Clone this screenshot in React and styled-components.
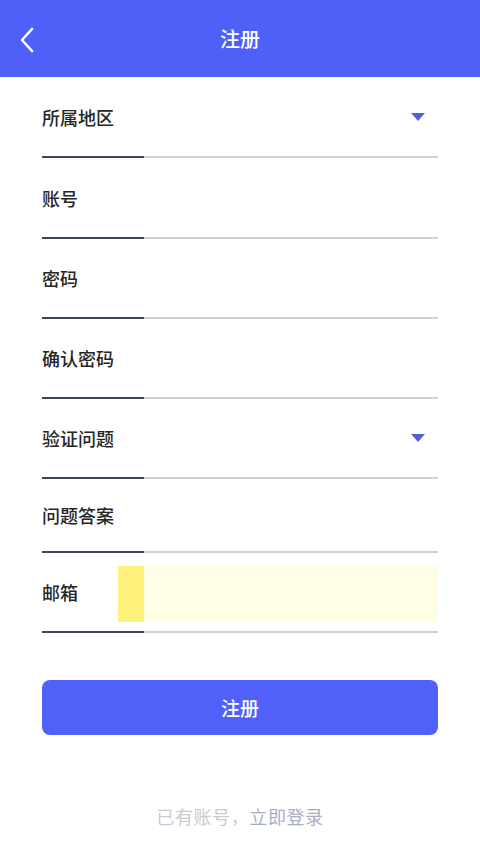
import React from "react";
import styled, { createGlobalStyle } from "styled-components";

const GlobalStyle = createGlobalStyle`
  html, body {
    margin: 0;
    padding: 0;
    background: #fff;
    font-family: "Noto Sans CJK SC", "Noto Sans", sans-serif;
  }
`;

const Page = styled.div`
  width: 480px;
  min-height: 853px;
  background: #fff;
`;

const TopBar = styled.div`
  height: 77px;
  background: #4f60f8;
  display: flex;
  align-items: center;
  justify-content: center;
  position: relative;
  color: #fff;
  font-size: 20px;
  font-weight: 500;
`;

const BackBtn = styled.div`
  position: absolute;
  left: 19px;
  top: 26px;
  width: 24px;
  height: 28px;
  display: flex;
  align-items: center;
`;

const Form = styled.div`
  padding: 0 42px;
  display: flex;
  flex-direction: column;
`;

const Row = styled.div`
  height: ${({ h }) => h}px;
  display: flex;
  align-items: center;
  justify-content: space-between;
  position: relative;
`;

const Label = styled.span`
  font-size: 18px;
  font-weight: 500;
  color: #262626;
  position: relative;
  z-index: 1;
`;

const Line = styled.div`
  height: 2px;
  background: #cfd0da;
  position: relative;

  &::before {
    content: "";
    position: absolute;
    left: 0;
    top: 0;
    width: 102px;
    height: 2px;
    background: #3a4660;
  }
`;

const Arrow = styled.div`
  width: 0;
  height: 0;
  border-left: 7px solid transparent;
  border-right: 7px solid transparent;
  border-top: 8px solid #5560d0;
  margin-right: 13px;
`;

const Autofill = styled.div`
  position: absolute;
  left: 76px;
  right: 0;
  top: 13px;
  height: 56px;
  background: linear-gradient(to right, #fff27a 0, #fff27a 26px, #fffde3 26px);
`;

const SubmitBtn = styled.button`
  margin: 47px 42px 0;
  width: 396px;
  height: 55px;
  border: none;
  border-radius: 8px;
  background: #5061f9;
  color: #fff;
  font-size: 19px;
  font-weight: 500;
  font-family: inherit;
`;

const Footer = styled.div`
  margin-top: 68px;
  text-align: center;
  font-size: 18px;
  color: #c9cad3;
  letter-spacing: 0.6px;
`;

const LoginLink = styled.span`
  color: #a9adc6;
`;

const fields = [
  { label: "所属地区", select: true, h: 79 },
  { label: "账号", h: 79 },
  { label: "密码", h: 78 },
  { label: "确认密码", h: 78 },
  { label: "验证问题", select: true, h: 78 },
  { label: "问题答案", h: 72 },
  { label: "邮箱", h: 78, autofill: true },
];

export default function App() {
  return (
    <Page>
      <GlobalStyle />
      <TopBar>
        <BackBtn>
          <svg width="16" height="26" viewBox="0 0 16 26" fill="none">
            <path d="M13 2 L3 13 L13 24" stroke="#fff" strokeWidth="2.6" strokeLinecap="round" strokeLinejoin="round" />
          </svg>
        </BackBtn>
        注册
      </TopBar>
      <Form>
        {fields.map((f) => (
          <React.Fragment key={f.label}>
            <Row h={f.h}>
              {f.autofill && <Autofill />}
              <Label>{f.label}</Label>
              {f.select && <Arrow />}
            </Row>
            <Line />
          </React.Fragment>
        ))}
      </Form>
      <SubmitBtn>注册</SubmitBtn>
      <Footer>
        已有账号，<LoginLink>立即登录</LoginLink>
      </Footer>
    </Page>
  );
}
